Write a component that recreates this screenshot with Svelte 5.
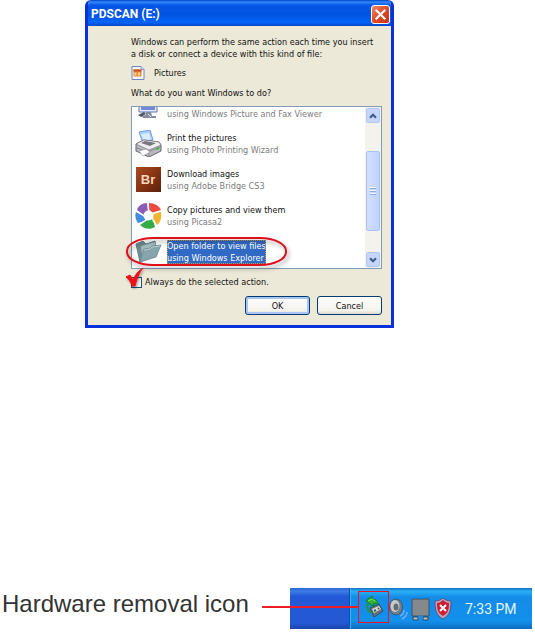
<script lang="ts">
    // the first row is scrolled half out of the list, only its note is in view
    const actions = [
        { id: "viewer", title: "", note: "using Windows Picture and Fax Viewer" },
        { id: "print", title: "Print the pictures", note: "using Photo Printing Wizard" },
        { id: "bridge", title: "Download images", note: "using Adobe Bridge CS3" },
        { id: "picasa", title: "Copy pictures and view them", note: "using Picasa2" },
        { id: "folder", title: "Open folder to view files", note: "using Windows Explorer" },
    ];

    let selected = $state("folder");
    let always = $state(false);
</script>

<main>
    <section class="stage">
        <div class="dialog" role="dialog" aria-labelledby="dialog-title">
            <header>
                <h1 id="dialog-title">PDSCAN (E:)</h1>
                <button class="close" aria-label="Close">
                    <svg viewBox="0 0 16 16"><path d="M3.5 3.5l9 9M12.5 3.5l-9 9" stroke="#fff" stroke-width="2" /></svg>
                </button>
            </header>

            <div class="body">
                <p>Windows can perform the same action each time you insert<br />a disk or connect a device with this kind of file:</p>
                <div class="kind">
                    <svg viewBox="0 0 14 14">
                        <path d="M1 .5h9l3 3v10H1z" fill="#f4f7ff" stroke="#7086bd" />
                        <path d="M10 .5v3h3" fill="#cbd8f5" stroke="#7086bd" stroke-width=".7" />
                        <path d="M2.5 3.5h8v7h-8z" fill="#e98a32" />
                        <path d="M2.5 3.5h8v2h-8z" fill="#c94d24" />
                        <path d="M3.5 9.5v-3h2v3M7 9.5v-3h2v3" fill="#ffd596" />
                    </svg>
                    <span>Pictures</span>
                </div>
                <p>What do you want Windows to do?</p>

                <div class="picker">
                    <div class="list">
                        <div class="rows">
                            {#each actions as action}
                                <button class="row" class:selected={selected === action.id} onclick={() => (selected = action.id)}>
                                    <svg viewBox="0 0 27 27">
                                        {#if action.id === "viewer"}
                                            <path d="M4 5h18v13H4z" fill="#e4eaff" stroke="#6173ae" />
                                            <path d="M6 7h14v9H6z" fill="#7387d7" />
                                            <path d="M11 18h5l1 4h4v2H8l-1-2 4-1z" fill="#858b9a" />
                                            <path d="M3 21l6-3 2 2-5 3z" fill="#505969" />
                                            <path d="M13 20l3 3" stroke="#e9edf8" />
                                        {:else if action.id === "print"}
                                            <path d="M4 2l11-2 3 10-10 3z" fill="#a9d0ff" stroke="#6f9ce0" />
                                            <path d="M6 4l8-1 2 6-7 2z" fill="#dcecff" />
                                            <path d="M1 14l8-4 15 2 2 3v6l-12 6L1 21z" fill="#b9b9c0" stroke="#65656d" />
                                            <path d="M1 14l8-4 15 2 2 3-12 5z" fill="#efeff2" stroke="#77777e" stroke-width=".7" />
                                            <path d="M6 13l4-2 11 2-6 3z" fill="#77787f" />
                                            <path d="M14 20v6M2 18l11 4 12-5" fill="none" stroke="#8a8a92" />
                                            <path d="M4 21l7-2 4 3-7 4z" fill="#fff" stroke="#97979e" stroke-width=".6" />
                                            <path d="M21 19l3-1" stroke="#4cac45" stroke-width="2" />
                                        {:else if action.id === "bridge"}
                                            <defs>
                                                <linearGradient id="bridge-fill" x2="1" y2="1">
                                                    <stop stop-color="#a84c24" />
                                                    <stop offset=".5" stop-color="#873412" />
                                                    <stop offset="1" stop-color="#5d210e" />
                                                </linearGradient>
                                            </defs>
                                            <path d="M1 1h25v25H1z" fill="url(#bridge-fill)" />
                                            <text x="13" y="18" text-anchor="middle">Br</text>
                                        {:else if action.id === "picasa"}
                                            <path d="M12 1C7 1 3 4 2 8l7 5 4-3z" fill="#8c5bb5" />
                                            <path d="M14 1c6 0 10 3 12 7l-10 3-2-3z" fill="#ec4b43" />
                                            <path d="M26 10c1 6-1 11-4 13l-5-9 2-3z" fill="#f1b42f" />
                                            <path d="M20 25c-5 3-11 2-15-2l9-6h4z" fill="#35ac48" />
                                            <path d="M3 21C0 17 0 13 1 10l9 5v4z" fill="#448ce2" />
                                            <path d="M13 1l1 8M26 9l-8 3M21 24l-4-7M4 22l7-4M1 9l8 5" stroke="#fff" />
                                            <circle cx="13.5" cy="13.5" r="5" fill="#fff" />
                                        {:else}
                                            <path d="M1 6l7-3 3 3 9-3 2 14-17 7z" fill="#6f8f94" stroke="#668289" />
                                            <path d="M6 8l14-4 1 12-13 7z" fill="#a5bdbe" />
                                            <path d="M5 24l4-13 6-1 2-2 9-1-5 12z" fill="#86a5ab" stroke="#6a8c95" stroke-width=".8" />
                                            <path d="M9 12l6-1 2-2 8-1" fill="none" stroke="#b7cccf" />
                                        {/if}
                                    </svg>
                                    <span class="copy"><span>{action.title}</span><br /><span class="note">{action.note}</span></span>
                                </button>
                            {/each}
                        </div>
                        <div class="scrollbar">
                            <button class="arrow" aria-label="Scroll up"><svg viewBox="0 0 14 14"><path d="M3.5 9L7 5.5 10.5 9" /></svg></button>
                            <div class="track"><div class="thumb"><i></i><i></i><i></i></div></div>
                            <button class="arrow" aria-label="Scroll down"><svg viewBox="0 0 14 14"><path d="M3.5 5L7 8.5 10.5 5" /></svg></button>
                        </div>
                    </div>
                    <svg class="ring" viewBox="0 0 166 36"><rect x="2" y="2" width="159" height="27" rx="26" ry="13" /></svg>
                </div>

                <div class="always">
                    <input id="always" type="checkbox" bind:checked={always} />
                    <label for="always">Always do the selected action.</label>
                    <svg class="tick" viewBox="0 0 20 22"><path d="M1 10l4-2 3 5C10 8 13 4 18 1 14 6 12 11 10 19H7C6 15 4 12 1 10z" /></svg>
                </div>

                <div class="buttons">
                    <button class="default">OK</button>
                    <button>Cancel</button>
                </div>
            </div>
        </div>
    </section>

    <section class="hint">
        <p>Hardware removal icon</p>
        <div class="taskbar">
            <div class="tray">
                <div class="marked">
                    <svg viewBox="0 0 22 24">
                        <path d="M7 13l9-4 4 7-9 6z" fill="#667480" stroke="#334c62" />
                        <path d="M9 14l7-3 2 3-7 4z" fill="#d6ddd5" />
                        <path d="M11 16l2-1M15 14l1-1" stroke="#44545d" stroke-width="2" />
                        <path d="M3 6l6-5v3c4 0 6 2 6 6-2-2-3-2-5-1l1 3z" fill="#30b42e" stroke="#15781e" />
                        <path d="M4 9l1 6 4 3" fill="none" stroke="#28942d" stroke-width="2" />
                        <path d="M5 6l4-2 3 2" fill="none" stroke="#83e16b" />
                    </svg>
                </div>
                <svg class="icon" viewBox="0 0 20 24">
                    <ellipse cx="7" cy="10" rx="6.5" ry="8" fill="#737f88" stroke="#3d596f" />
                    <ellipse cx="6" cy="9" rx="4.5" ry="6" fill="#c8cbc7" />
                    <ellipse cx="7" cy="10" rx="2.5" ry="3.5" fill="#5f6c73" />
                    <path d="M11 19c3-1 4-3 4-6M13 22c4-2 5-4 5-7" fill="none" stroke="#78a9ff" stroke-width="1.5" />
                </svg>
                <svg class="icon" viewBox="0 0 20 24">
                    <path d="M1 2h17v17H1z" fill="#85898c" stroke="#3c5267" />
                    <path d="M2 20h5v3H2zM12 20h5v3h-5z" fill="#bcc4c7" stroke="#294462" />
                    <path d="M7 20h5" stroke="#268ae2" stroke-width="3" />
                </svg>
                <svg class="icon" viewBox="0 0 20 24">
                    <path d="M10 1c2 2 5 3 8 3 0 9-1 14-8 18C3 18 2 13 2 4c3 0 6-1 8-3z" fill="#b9a8bd" stroke="#56517d" />
                    <path d="M10 3c2 2 4 3 6 3 0 7-1 10-6 13-5-3-6-6-6-13 2 0 4-1 6-3z" fill="#cf1c32" />
                    <path d="M7 8l6 6M13 8l-6 6" stroke="#fff" stroke-width="2" />
                </svg>
                <time>7:33 PM</time>
            </div>
        </div>
    </section>
</main>

<style>
    :global(body) {
        margin: 0;
        background: #fff;
    }

    main {
        font-family: Tahoma, "DejaVu Sans Condensed", sans-serif;
        font-size: 9px;
        line-height: 12px;
        color: #111;
    }

    p,
    h1 {
        margin: 0;
        font-weight: normal;
    }

    button {
        padding: 0;
        font: inherit;
        color: inherit;
    }

    svg {
        display: block;
        flex: none;
    }

    .stage {
        display: grid;
        grid-template-columns: 85fr 309fr 141fr;
    }

    .dialog {
        grid-column: 2;
        box-sizing: border-box;
        border: solid #0831d9;
        border-width: 0 3px 3px;
        border-radius: 6px 6px 0 0;
        background: #ece9d8;
        overflow: hidden;
    }

    header {
        display: flex;
        align-items: center;
        justify-content: space-between;
        height: 26px;
        margin: 0 -3px;
        padding: 2px 4px 0 6px;
        box-sizing: border-box;
        background: linear-gradient(#0043c8, #3189fb 8%, #0756e5 20%, #0054e3 60%, #0565fb 85%, #0247c9);
    }

    h1 {
        font-family: Roboto, "Liberation Sans", sans-serif;
        font-size: 12px;
        font-weight: bold;
        color: #fff;
    }

    .close {
        width: 19px;
        height: 19px;
        border: 1px solid #fff;
        border-radius: 3px;
        background: linear-gradient(135deg, #ee8b6e, #df4b24 50%, #c43410);
    }

    .body {
        padding: 10px 9px 10px 43px;
    }

    .body p {
        white-space: nowrap;
    }

    .kind {
        display: flex;
        align-items: center;
        gap: 9px;
        height: 16px;
        margin: 5px 0 6px;
    }

    .kind svg {
        width: 14px;
        height: 14px;
    }

    .picker {
        position: relative;
        margin-top: 7px;
    }

    .list {
        display: flex;
        height: 163px;
        box-sizing: border-box;
        border: 1px solid #7f9db9;
        background: #fff;
        overflow: hidden;
    }

    .rows {
        display: flex;
        flex: 1;
        flex-direction: column;
        justify-content: flex-end;
    }

    .row {
        display: flex;
        flex: none;
        align-items: center;
        gap: 5px;
        height: 36px;
        padding: 3px 0 0 3px;
        border: 0;
        background: none;
        text-align: left;
        white-space: nowrap;
    }

    .row svg {
        width: 27px;
        height: 27px;
    }

    .row text {
        font-family: "Liberation Sans", sans-serif;
        font-size: 13px;
        font-weight: bold;
        fill: #f8d6bd;
    }

    .note {
        color: #7c7c7c;
    }

    .selected .copy {
        background: #316ac5;
        color: #fff;
        outline: 1px dotted #c59a4a;
        outline-offset: -1px;
    }

    .selected .note {
        color: #fff;
    }

    .scrollbar {
        display: flex;
        flex-direction: column;
        width: 14px;
        padding: 1px;
        background: #f3f2ec;
    }

    .arrow {
        height: 15px;
        border: 1px solid #b2c7f5;
        border-radius: 2px;
        background: #c5d5fc;
    }

    .arrow svg {
        width: 12px;
        height: 12px;
    }

    .arrow path {
        fill: none;
        stroke: #435c8f;
        stroke-width: 2.5;
    }

    .track {
        flex: 1;
        padding-top: 28px;
    }

    .thumb {
        display: flex;
        flex-direction: column;
        align-items: center;
        justify-content: center;
        gap: 1px;
        height: 80px;
        box-sizing: border-box;
        border: 1px solid #a9c1f5;
        border-radius: 2px;
        background: linear-gradient(90deg, #d2e0ff, #bfd3fd);
    }

    .thumb i {
        width: 6px;
        height: 1px;
        border-bottom: 1px solid #8ca9e8;
        background: #f2f6ff;
    }

    .ring {
        position: absolute;
        left: -6px;
        bottom: -3px;
        width: 166px;
        height: 36px;
        pointer-events: none;
        filter: drop-shadow(2px 3px 2px rgba(0, 0, 0, 0.35));
    }

    .ring rect {
        fill: none;
        stroke: #e0101b;
        stroke-width: 2;
    }

    .always {
        position: relative;
        display: flex;
        align-items: center;
        gap: 3px;
        height: 14px;
        margin-top: 6px;
    }

    .always input {
        appearance: none;
        width: 11px;
        height: 11px;
        margin: 0;
        border: 1px solid #1c5180;
        background: #f7f7f3;
    }

    .tick {
        position: absolute;
        left: -6px;
        bottom: 0;
        width: 20px;
        height: 22px;
        pointer-events: none;
        filter: drop-shadow(1px 2px 1px rgba(0, 0, 0, 0.35));
    }

    .tick path {
        fill: #f20d14;
        stroke: #f20d14;
    }

    .buttons {
        display: flex;
        justify-content: flex-end;
        gap: 7px;
        margin-top: 7px;
    }

    .buttons button {
        width: 65px;
        height: 19px;
        border: 1px solid #003c74;
        border-radius: 3px;
        background: linear-gradient(#fff, #f4f3ee 80%, #dcd8cc);
    }

    .buttons .default {
        box-shadow: inset 0 0 0 2px #a9c5f3;
    }

    .hint {
        display: grid;
        grid-template-columns: 290fr 242fr 3fr;
        margin-top: 260px;
    }

    .hint p {
        padding: 2px 0 0 2px;
        font-family: "Liberation Sans", Arial, sans-serif;
        font-size: 24px;
        line-height: 28px;
        white-space: nowrap;
        color: #333;
    }

    .taskbar {
        height: 41px;
        padding-left: 59px;
        background: linear-gradient(#2f68cf, #3d7ce8 8%, #2359d6 20%, #2458d5 85%, #1b45ac);
    }

    .tray {
        display: flex;
        align-items: center;
        gap: 2px;
        height: 41px;
        padding-left: 8px;
        box-sizing: border-box;
        border-left: 1px solid #0d4ca6;
        background: linear-gradient(#1470c8, #29b1f5 8%, #148ce8 22%, #1290ec 80%, #0f6cc0);
        box-shadow: inset 1px 0 #35b8f5;
    }

    .marked {
        position: relative;
        display: grid;
        place-items: center;
        width: 31px;
        height: 32px;
        margin: 0 -2px 3px 0;
        box-sizing: border-box;
        border: 1px solid #e8142c;
    }

    .marked::before {
        content: "";
        position: absolute;
        right: 100%;
        width: 97px;
        height: 2px;
        background: #ee1c25;
    }

    .marked svg {
        width: 22px;
        height: 24px;
    }

    .icon {
        width: 20px;
        height: 24px;
    }

    time {
        margin-left: 10px;
        font-family: Roboto, "Liberation Sans", sans-serif;
        font-size: 14px;
        line-height: 16px;
        white-space: nowrap;
        color: #e4f4ff;
    }
</style>
